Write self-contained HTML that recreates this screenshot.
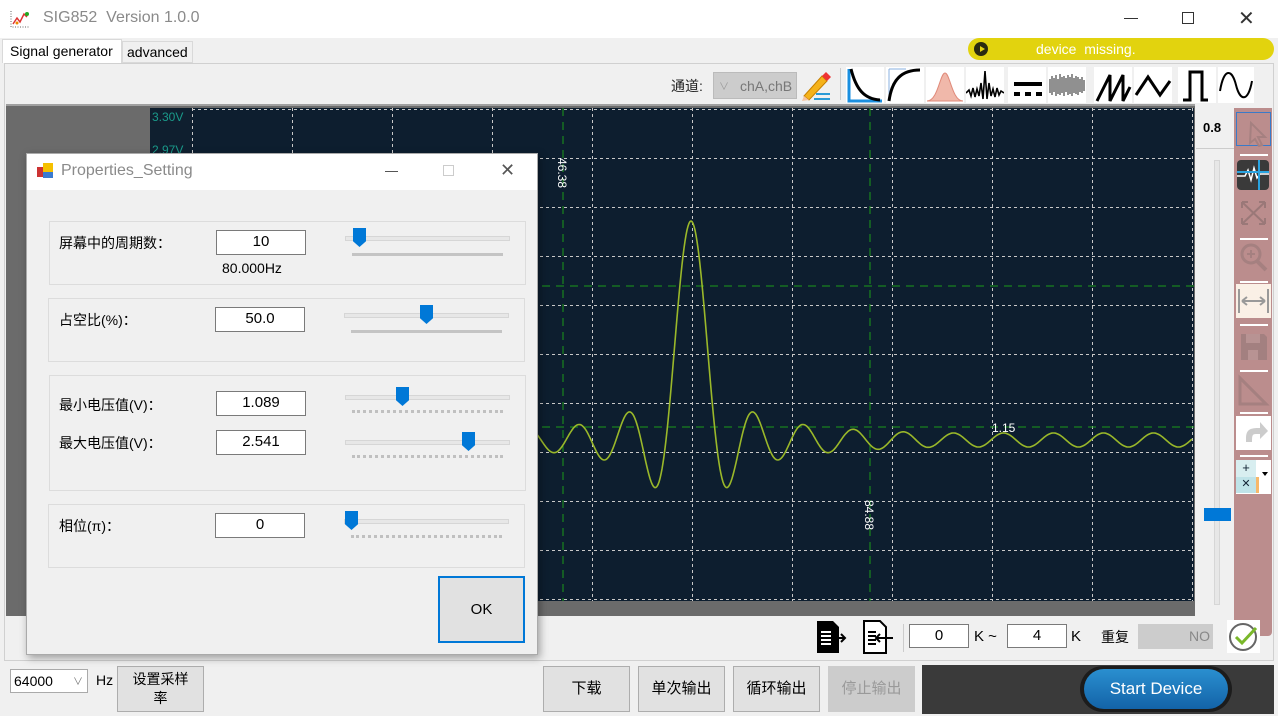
<!DOCTYPE html>
<html><head><meta charset="utf-8"><style>
*{box-sizing:border-box;margin:0;padding:0}
body{width:1278px;height:716px;overflow:hidden;background:#f0f0f0;font-family:"Liberation Sans","Noto Sans CJK SC",sans-serif;font-size:14px;color:#000;position:relative}
.a{position:absolute}
.inp{position:absolute;background:#fff;border:1px solid #7a7a7a;text-align:center;font-size:15px;line-height:22px}
.btn{position:absolute;background:#e1e1e1;border:1px solid #adadad;text-align:center;font-size:15px}
.grp{position:absolute;border:1px solid #dcdcdc}
.trk{position:absolute;height:5px;background:#e7e7e7;border:1px solid #d6d6d6}
.thumb{position:absolute;width:13px;height:19px;background:#0078d7;clip-path:polygon(0 0,100% 0,100% 70%,50% 100%,0 70%)}
.tick{position:absolute;height:3px;border-bottom:3px dotted #c0c0c0}
.ic{position:absolute;top:67px;width:38px;height:36px;background:#fff}
.tl{position:absolute;left:1236px;width:35px;height:34px}
.sep{position:absolute;left:1240px;width:28px;height:2px;background:#fff}
</style></head><body>
<div class="a" style="left:0;top:0;width:1278px;height:38px;background:#fff"></div>
<svg class="a" style="left:9px;top:9px" width="22" height="20"><path d="M2 2V18H20" stroke="#666" stroke-dasharray="1 1.5" fill="none"/><path d="M4 15L8 9 11 13 15 5 18 8" stroke="#d33" stroke-width="1.5" fill="none"/><circle cx="18" cy="5" r="2" fill="#2a2"/><circle cx="8" cy="14" r="1.5" fill="#e80"/></svg>
<div class="a" style="left:43px;top:9px;font-size:16px;color:#8a8a8a">SIG852&nbsp; Version 1.0.0</div>
<div class="a" style="left:1124px;top:18px;width:14px;height:1px;background:#333"></div>
<div class="a" style="left:1182px;top:12px;width:12px;height:12px;border:1px solid #333"></div>
<div class="a" style="left:1238px;top:6px;font-size:20px;color:#333">✕</div>
<div class="a" style="left:2px;top:39px;width:120px;height:24px;background:#fff;border:1px solid #d9d9d9;border-bottom:none;font-size:14px;padding:3px 0 0 7px">Signal generator</div>
<div class="a" style="left:122px;top:41px;width:71px;height:22px;border:1px solid #d9d9d9;font-size:14px;padding:2px 0 0 4px">advanced</div>
<div class="a" style="left:968px;top:38px;width:306px;height:22px;background:#e2d30e;border-radius:11px"></div>
<div class="a" style="left:974px;top:42px;width:14px;height:14px;border-radius:7px;background:#2a2a10"></div>
<div class="a" style="left:980px;top:46px;border-left:5px solid #e2d30e;border-top:3px solid transparent;border-bottom:3px solid transparent"></div>
<div class="a" style="left:1036px;top:41px;color:#fff;font-size:14px">device&nbsp; missing.</div>
<div class="a" style="left:4px;top:63px;width:1270px;height:598px;background:#f0f0f0;border:1px solid #d0d0d0"></div>
<div class="a" style="left:671px;top:76px;font-size:14px;color:#222">通道:</div>
<div class="a" style="left:713px;top:72px;width:84px;height:27px;background:#cccccc;border:1px solid #bbb;color:#777;font-size:14px;padding:5px 0 0 26px">chA,chB</div>
<div class="a" style="left:719px;top:78px;color:#999;font-size:10px">∨</div>
<svg class="a" style="left:800px;top:68px" width="36" height="34"><path d="M4 28L22 8 27 13 9 32Z" fill="#f5b21a" stroke="#c78000"/><path d="M22 8L26 4 31 9 27 13Z" fill="#e33"/><path d="M4 28L2 33 9 32" fill="#f4c3a0"/><path d="M16 26H30M14 31H30" stroke="#2a9ad6" stroke-width="2"/></svg>
<div class="a" style="left:840px;top:68px;width:1px;height:32px;background:#ccc"></div>
<div class="ic" style="left:846px"><svg width="38" height="36"><path d="M3 2V34H36" stroke="#1a8fe0" stroke-width="3" fill="none"/><path d="M5 2C10 22 18 32 34 33" stroke="#000" stroke-width="3" fill="none"/></svg></div>
<div class="ic" style="left:886px"><svg width="38" height="36"><path d="M3 2H20" stroke="#8ab0e0" stroke-width="1"/><path d="M3 2V34" stroke="#8ab0e0"/><path d="M3 34C6 12 16 3 34 3" stroke="#000" stroke-width="3" fill="none"/></svg></div>
<div class="ic" style="left:926px"><svg width="38" height="36"><path d="M1 34C12 34 14 6 19 6S26 34 37 34Z" fill="#f0b8aa" stroke="#e08a7a"/></svg></div>
<div class="ic" style="left:966px"><svg width="38" height="36"><path d="M0 26L3 23 5 29 7 21 9 30 11 22 13 29 15 16 17 32 19 4 21 32 23 16 25 29 27 22 29 30 31 21 33 28 35 24 38 26" stroke="#000" stroke-width="1.6" fill="none"/></svg></div>
<div class="ic" style="left:1008px"><svg width="38" height="36"><rect x="6" y="15" width="28" height="4"/><rect x="6" y="25" width="6" height="4"/><rect x="17" y="25" width="6" height="4"/><rect x="28" y="25" width="6" height="4"/></svg></div>
<div class="ic" style="left:1048px"><svg width="38" height="36"><g stroke="#222" stroke-width="1"><path d="M2 12V26M4 9V28M6 11V25M8 8V29M10 12V27M12 7V28M14 10V26M16 9V29M18 11V25M20 8V28M22 10V27M24 7V29M26 11V26M28 9V27M30 10V28M32 12V25M34 10V26M36 13V24"/></g></svg></div>
<div class="ic" style="left:1094px"><svg width="38" height="36"><path d="M3 34L16 8V34L29 8V34L36 20" stroke="#000" stroke-width="3" fill="none"/></svg></div>
<div class="ic" style="left:1134px"><svg width="38" height="36"><path d="M2 28L14 10 26 28 36 14" stroke="#000" stroke-width="3" fill="none"/></svg></div>
<div class="ic" style="left:1178px"><svg width="38" height="36"><path d="M5 33H12V5H24V33H30" stroke="#000" stroke-width="3" fill="none"/></svg></div>
<div class="ic" style="left:1218px;width:36px"><svg width="38" height="36"><path d="M2 24C6 0 14 2 18 18S30 36 34 14" stroke="#000" stroke-width="2" fill="none"/></svg></div>
<div class="a" style="left:6px;top:104px;width:1189px;height:512px;background:#6b6b6b;border-top:2px solid #a0a0a0"></div>
<div class="a" style="left:150px;top:108px;width:42px;height:492px;background:#0f1f2f"></div>
<div class="a" style="left:152px;top:110px;color:#1a9a8a;font-size:12px">3.30V</div>
<div class="a" style="left:152px;top:143px;color:#1a9a8a;font-size:12px">2.97V</div>
<svg class="a" style="left:192px;top:108px" width="1002" height="493">
<rect width="1002" height="493" fill="#0d1e2f"/>
<g stroke="#c8c8c8" stroke-width="1" stroke-dasharray="3 3" fill="none" id="grid"></g>
<g stroke="#1a9a1a" stroke-width="1" stroke-dasharray="8 6"><path d="M371 0V493M678 0V493M0 178H1002M0 319H1002"/></g>
<path id="wave" stroke="#9ab82a" stroke-width="1.6" fill="none"/>
<text x="800" y="324" fill="#fff" font-size="12" font-family="Liberation Sans">1.15</text>
<text transform="translate(366,50) rotate(90)" fill="#fff" font-size="12" font-family="Liberation Sans">46.38</text>
<text transform="translate(673,392) rotate(90)" fill="#fff" font-size="12" font-family="Liberation Sans">84.88</text>
</svg>
<script>
var g=document.getElementById('grid'),d='';
for(var i=0;i<=10;i++){d+='M'+(i*100+0.5)+' 0V493';}
for(var j=0;j<=10;j++){d+='M0 '+(j*49+1.5)+'H1002';}
g.innerHTML='<path d="'+d+'"/>';
var p='';for(var x=340;x<=1000;x++){var u=(x+192-691)/25*Math.PI;var val;
if(Math.abs(u)<1e-6)val=1;else{var env=Math.max(1/Math.abs(u),7/219);val=Math.sin(u)*env*(u>0?1:-1);}
var y=332-219*val;p+=(x==340?'M':'L')+x+' '+y.toFixed(1);}
document.getElementById('wave').setAttribute('d',p);
</script>
<div class="a" style="left:1195px;top:108px;width:39px;height:500px;background:#f0f0f0"></div>
<div class="a" style="left:1203px;top:120px;font-size:13px;font-weight:bold">0.8</div>
<div class="a" style="left:1196px;top:148px;width:38px;height:1px;background:#ccc"></div>
<div class="a" style="left:1214px;top:160px;width:6px;height:445px;background:#e7e7e7;border:1px solid #d6d6d6"></div>
<div class="a" style="left:1204px;top:508px;width:27px;height:13px;background:#0078d7"></div>
<div class="a" style="left:1234px;top:108px;width:38px;height:528px;background:#bb8d8d;border-radius:0 0 4px 4px"></div>
<div class="tl" style="top:112px;border:1px solid #3a7ac8"><svg width="35" height="34"><path d="M14 10L28 24 21 24 25 32 22 33 18 26 13 30Z" fill="none" stroke="#a58080" stroke-width="2"/></svg></div>
<div class="sep" style="top:154px"></div>
<div class="tl" style="top:160px;left:1237px;width:32px;height:30px;background:#3a3a3a;border-radius:4px"><svg width="32" height="30"><path d="M0 16H8L11 10 14 20 17 8 20 18 23 14H32" stroke="#fff" stroke-width="1.5" fill="none"/><path d="M22 0V30M0 12H32" stroke="#29a3e0" stroke-width="2"/></svg></div>
<div class="tl" style="top:198px"><svg width="35" height="30"><path d="M6 4L29 26M29 4L6 26M6 4h6M6 4v6M29 26h-6M29 26v-6M29 4h-6M29 4v6M6 26h6M6 26v-6" stroke="#9a7878" stroke-width="2" fill="none"/></svg></div>
<div class="sep" style="top:238px"></div>
<div class="tl" style="top:240px"><svg width="35" height="34"><circle cx="15" cy="14" r="9" fill="none" stroke="#a58080" stroke-width="3"/><path d="M21 21L30 30" stroke="#a58080" stroke-width="4"/><path d="M11 14H19M15 10V18" stroke="#a58080" stroke-width="2"/></svg></div>
<div class="sep" style="top:281px"></div>
<div class="tl" style="top:284px;background:#faf0e6"><svg width="35" height="34"><path d="M3 5V29M32 5V29M6 17H29M6 17l5-4M6 17l5 4M29 17l-5-4M29 17l-5 4" stroke="#999" stroke-width="2" fill="none"/></svg></div>
<div class="sep" style="top:324px"></div>
<div class="tl" style="top:330px"><svg width="35" height="34"><path d="M5 4H28L31 7V30H5Z" fill="#a38080"/><rect x="10" y="4" width="14" height="9" fill="#b89393"/><rect x="12" y="20" width="10" height="10" fill="#b89393"/></svg></div>
<div class="sep" style="top:370px"></div>
<div class="tl" style="top:374px"><svg width="35" height="34"><path d="M4 30V4L30 30Z" fill="none" stroke="#a58080" stroke-width="3"/></svg></div>
<div class="sep" style="top:412px"></div>
<div class="tl" style="top:416px;background:#fff"><svg width="35" height="34"><path d="M10 26V22C10 14 14 12 22 12H24V6L32 15 24 23V18H20C16 18 16 20 16 26Z" fill="#ccc"/></svg></div>
<div class="sep" style="top:455px"></div>
<div class="tl" style="top:460px;background:#fff"><div class="a" style="left:0;top:0;width:20px;height:17px;background:#d8eef0;font-size:13px;color:#123;text-align:center">+</div><div class="a" style="left:0;top:17px;width:20px;height:16px;background:#bfe3e8;font-size:11px;color:#123;text-align:center">✕</div><div class="a" style="left:20px;top:17px;width:3px;height:16px;background:#f7b86a"></div><div class="a" style="left:26px;top:12px;border-top:4px solid #000;border-left:3px solid transparent;border-right:3px solid transparent"></div></div>
<svg class="a" style="left:815px;top:620px" width="32" height="34"><path d="M2 1H18L24 7V33H2Z" fill="#000"/><path d="M6 12H16M6 16H16M6 20H16M6 24H16" stroke="#fff" stroke-width="2"/><path d="M18 18H30M26 14L30 18 26 22" stroke="#000" stroke-width="2" fill="none"/></svg>
<svg class="a" style="left:862px;top:620px" width="32" height="34"><path d="M2 1H18L24 7V33H2Z" fill="#fff" stroke="#000" stroke-width="2"/><path d="M6 12H14M6 16H14M6 20H14M6 24H14" stroke="#000" stroke-width="2"/><path d="M14 18H31M18 14L14 18 18 22" stroke="#000" stroke-width="2" fill="none"/></svg>
<div class="a" style="left:903px;top:624px;width:1px;height:28px;background:#ccc"></div>
<div class="inp" style="left:909px;top:624px;width:60px;height:24px">0</div>
<div class="a" style="left:974px;top:628px;font-size:15px">K ~</div>
<div class="inp" style="left:1007px;top:624px;width:60px;height:24px">4</div>
<div class="a" style="left:1071px;top:628px;font-size:15px">K</div>
<div class="a" style="left:1101px;top:627px;font-size:14px">重复</div>
<div class="a" style="left:1138px;top:624px;width:75px;height:25px;background:#ccc;color:#888;font-size:14px;text-align:right;padding:4px 3px 0 0">NO</div>
<svg class="a" style="left:1227px;top:620px" width="33" height="33"><rect width="33" height="33" fill="#fff"/><circle cx="16" cy="17" r="13" fill="none" stroke="#666" stroke-width="2"/><path d="M9 17L15 23 29 8" stroke="#7ab82a" stroke-width="3" fill="none"/></svg>
<div class="a" style="left:10px;top:669px;width:78px;height:24px;background:#fff;border:1px solid #aaa;padding:3px 0 0 3px;font-size:14px">64000<span style="position:absolute;left:62px;top:3px;color:#777;font-size:10px">∨</span></div>
<div class="a" style="left:96px;top:672px;font-size:14px">Hz</div>
<div class="btn" style="left:117px;top:666px;width:87px;height:46px;line-height:19px;padding-top:3px;font-size:14px">设置采样<br>率</div>
<div class="btn" style="left:543px;top:666px;width:87px;height:46px;line-height:44px">下载</div>
<div class="btn" style="left:638px;top:666px;width:87px;height:46px;line-height:44px">单次输出</div>
<div class="btn" style="left:733px;top:666px;width:87px;height:46px;line-height:44px">循环输出</div>
<div class="btn" style="left:828px;top:666px;width:87px;height:46px;line-height:44px;background:#ccc;border-color:#ccc;color:#999">停止输出</div>
<div class="a" style="left:922px;top:665px;width:352px;height:49px;background:#3a3a3a"></div>
<div class="a" style="left:1080px;top:666px;width:152px;height:46px;border-radius:23px;background:#1c1c1c"></div>
<div class="a" style="left:1084px;top:669px;width:144px;height:40px;border-radius:20px;background:linear-gradient(#2a8fd0,#1363a8);color:#fff;font-size:17px;text-align:center;line-height:40px">Start Device</div>
<div class="a" style="left:26px;top:153px;width:512px;height:502px;background:#f0f0f0;border:1px solid #aaa;box-shadow:2px 3px 8px rgba(0,0,0,.35)"></div>
<div class="a" style="left:27px;top:154px;width:510px;height:36px;background:#fff"></div>
<svg class="a" style="left:37px;top:163px" width="18" height="16"><rect x="0" y="4" width="6" height="10" fill="#c33"/><rect x="6" y="0" width="10" height="9" fill="#f5c000"/><rect x="6" y="9" width="10" height="6" fill="#3a7ad0"/></svg>
<div class="a" style="left:61px;top:162px;font-size:16px;color:#8a8a8a">Properties_Setting</div>
<div class="a" style="left:385px;top:171px;width:13px;height:1px;background:#555"></div>
<div class="a" style="left:443px;top:165px;width:11px;height:11px;border:1px solid #ccc"></div>
<div class="a" style="left:500px;top:160px;font-size:18px;color:#555">✕</div>
<div class="grp" style="left:49px;top:221px;width:477px;height:64px"></div>
<div class="grp" style="left:48px;top:298px;width:477px;height:64px"></div>
<div class="grp" style="left:49px;top:375px;width:477px;height:116px"></div>
<div class="grp" style="left:48px;top:504px;width:477px;height:64px"></div>
<div class="a" style="left:59px;top:233px;font-size:14px">屏幕中的周期数：</div>
<div class="inp" style="left:216px;top:230px;width:90px;height:25px">10</div>
<div class="a" style="left:222px;top:260px;font-size:14px">80.000Hz</div>
<div class="trk" style="left:345px;top:236px;width:165px"></div>
<div class="thumb" style="left:353px;top:228px"></div>
<div class="a" style="left:352px;top:253px;width:151px;height:3px;background:#c4c4c4"></div>
<div class="a" style="left:59px;top:310px;font-size:14px">占空比(%)：</div>
<div class="inp" style="left:215px;top:307px;width:90px;height:25px">50.0</div>
<div class="trk" style="left:344px;top:313px;width:165px"></div>
<div class="thumb" style="left:420px;top:305px"></div>
<div class="a" style="left:351px;top:330px;width:151px;height:3px;background:#c4c4c4"></div>
<div class="a" style="left:59px;top:395px;font-size:14px">最小电压值(V)：</div>
<div class="inp" style="left:216px;top:391px;width:90px;height:25px">1.089</div>
<div class="trk" style="left:345px;top:395px;width:165px"></div>
<div class="thumb" style="left:396px;top:387px"></div>
<div class="tick" style="left:352px;top:410px;width:151px"></div>
<div class="a" style="left:59px;top:433px;font-size:14px">最大电压值(V)：</div>
<div class="inp" style="left:216px;top:430px;width:90px;height:25px">2.541</div>
<div class="trk" style="left:345px;top:440px;width:165px"></div>
<div class="thumb" style="left:462px;top:432px"></div>
<div class="tick" style="left:352px;top:455px;width:151px"></div>
<div class="a" style="left:59px;top:516px;font-size:14px">相位(π)：</div>
<div class="inp" style="left:215px;top:513px;width:90px;height:25px">0</div>
<div class="trk" style="left:344px;top:519px;width:165px"></div>
<div class="thumb" style="left:345px;top:511px"></div>
<div class="tick" style="left:351px;top:535px;width:151px"></div>
<div class="btn" style="left:438px;top:576px;width:87px;height:67px;border:2px solid #0078d7;line-height:63px">OK</div>
</body></html>
